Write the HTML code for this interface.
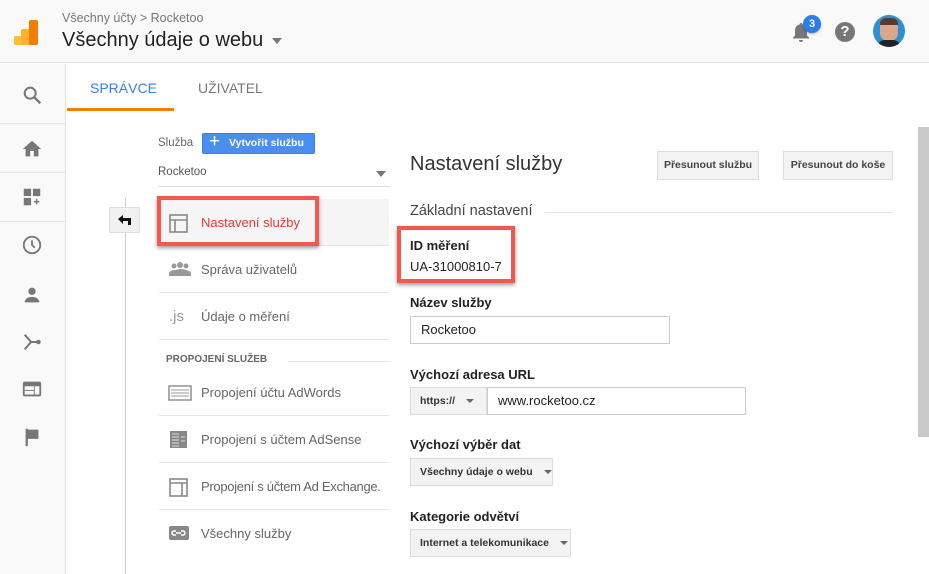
<!DOCTYPE html>
<html><head><meta charset="utf-8"><style>
*{box-sizing:border-box;margin:0;padding:0}
body{width:929px;height:574px;overflow:hidden;background:#fff;font-family:"Liberation Sans",Roboto,sans-serif;position:relative;color:#333}
.abs{position:absolute;white-space:nowrap}
.hdr{left:0;top:0;width:929px;height:63px;background:#f9f9f9;border-bottom:1px solid #e0e0e0}
.side{left:0;top:64px;width:66px;height:510px;background:#f9f9f9;border-right:1px solid #e3e3e3}
.ic{position:absolute;left:21px;width:22px;height:22px}
.sep{position:absolute;left:0;width:66px;height:1px;background:#e3e3e3}
.nav{left:159px;width:230px;height:47px;border-bottom:1px solid #e5e5e5;font-size:13px;color:#666;line-height:47px;padding-left:42px;overflow:hidden}
.nav svg{position:absolute;left:9px;top:14px}
.lbl{font-size:13px;font-weight:bold;color:#222;left:410px}
.btn{background:#f3f3f3;border:1px solid #ddd;font-size:10.5px;font-weight:bold;color:#444;text-align:center}
.sel{background:#f3f3f3;border:1px solid #ddd;font-size:10.5px;font-weight:bold;color:#333;padding-left:9px;line-height:26px}
.car{display:inline-block;border-left:4px solid transparent;border-right:4px solid transparent;border-top:4px solid #666;vertical-align:middle;margin-left:8px}
.inp{border:1px solid #ccc;font-size:13px;color:#222;padding-left:10px;line-height:26px;background:#fff}
</style></head><body>
<div class="abs hdr"></div>
<svg class="abs" style="left:14px;top:19px" width="28" height="28"><rect x="0" y="17" width="10" height="9" rx="2" fill="#fbc02d"/><rect x="7" y="10" width="10" height="16" rx="2" fill="#f9b233"/><rect x="15" y="1" width="9" height="25" rx="2" fill="#f57c00"/></svg>
<div class="abs" style="left:62px;top:11px;font-size:12.5px;color:#777">Všechny účty &gt; Rocketoo</div>
<div class="abs" style="left:62px;top:29px;font-size:20px;color:#222;font-weight:500">Všechny údaje o webu <span class="car" style="border-width:6px 5px 0 5px;border-top-color:#777;margin-left:3px"></span></div>
<svg class="abs" style="left:791px;top:22px" width="20" height="22"><path d="M10 1c1 0 1.5.8 1.5 1.5 3 .8 4.5 3 4.5 6v5l2 2v1H2v-1l2-2v-5c0-3 1.5-5.2 4.5-6C8.5 1.8 9 1 10 1zM8 18h4a2 2 0 01-4 0z" fill="#777"/></svg>
<div class="abs" style="left:803px;top:15px;width:18px;height:18px;border-radius:9px;background:#2b7de9;color:#fff;font-size:11px;font-weight:bold;text-align:center;line-height:18px;box-shadow:0 1px 2px rgba(0,0,0,.3)">3</div>
<div class="abs" style="left:835px;top:22px;width:20px;height:20px;border-radius:10px;background:#777;color:#fff;font-size:15px;font-weight:bold;text-align:center;line-height:20px">?</div>
<div class="abs" style="left:873px;top:15px;width:32px;height:32px;border-radius:16px;background:#2f8fd0;overflow:hidden"><div style="position:absolute;left:7px;top:4px;width:18px;height:22px;border-radius:8px;background:#d9a88a"></div><div style="position:absolute;left:7px;top:3px;width:18px;height:7px;background:#5a3a2a;border-radius:6px 6px 0 0"></div><div style="position:absolute;left:4px;top:25px;width:24px;height:10px;background:#222;border-radius:8px 8px 0 0"></div></div>

<div class="abs side">
<svg class="ic" style="top:20px" viewBox="0 0 24 24"><circle cx="10" cy="10" r="6" fill="none" stroke="#777" stroke-width="2.2"/><path d="M14.5 14.5L21 21" stroke="#777" stroke-width="2.6"/></svg>
<div class="sep" style="top:59px"></div>
<svg class="ic" style="top:74px" viewBox="0 0 24 24"><path d="M12 3L2 12h3v8h5v-6h4v6h5v-8h3z" fill="#777"/></svg>
<div class="sep" style="top:108px"></div>
<svg class="ic" style="top:122px" viewBox="0 0 24 24"><rect x="3" y="3" width="8" height="8" fill="#777"/><rect x="13" y="3" width="8" height="8" fill="#777"/><rect x="3" y="13" width="8" height="8" fill="#777"/><path d="M17 14v6M14 17h6" stroke="#777" stroke-width="1.6"/></svg>
<div class="sep" style="top:157px"></div>
<svg class="ic" style="top:170px" viewBox="0 0 24 24"><circle cx="12" cy="12" r="9" fill="none" stroke="#777" stroke-width="2"/><path d="M12 7v5l3 3" fill="none" stroke="#777" stroke-width="2"/></svg>
<svg class="ic" style="top:220px" viewBox="0 0 24 24"><circle cx="12" cy="8" r="4" fill="#777"/><path d="M4 20c0-4 4-6 8-6s8 2 8 6z" fill="#777"/></svg>
<svg class="ic" style="top:267px" viewBox="0 0 24 24"><path d="M4 4l7 8-7 8M11 12h9" fill="none" stroke="#777" stroke-width="2.2"/><circle cx="19" cy="12" r="2.5" fill="#777"/></svg>
<svg class="ic" style="top:314px" viewBox="0 0 24 24"><rect x="2" y="4" width="20" height="16" rx="2" fill="#777"/><rect x="4" y="9" width="10" height="4" fill="#f9f9f9"/><rect x="4" y="14" width="10" height="4" fill="#f9f9f9"/><rect x="15" y="9" width="5" height="9" fill="#f9f9f9"/></svg>
<svg class="ic" style="top:362px" viewBox="0 0 24 24"><path d="M5 3v19h2.5v-8H19V4H7.5V3z" fill="#777"/></svg>
</div>

<div class="abs" style="left:90px;top:80px;font-size:14px;color:#3a7ee8;font-weight:500">SPRÁVCE</div>
<div class="abs" style="left:198px;top:80px;font-size:14px;color:#777;font-weight:500">UŽIVATEL</div>
<div class="abs" style="left:67px;top:108px;width:107px;height:3px;background:#f57c00"></div>

<div class="abs" style="left:125px;top:198px;width:1px;height:376px;background:#ccc"></div>
<div class="abs" style="left:109px;top:207px;width:31px;height:26px;background:#f1f1f1;border:1px solid #ddd"><svg style="position:absolute;left:7px;top:6px" width="16" height="12"><path d="M1 5l5-4v3h8v7h-3V7H6v3z" fill="#111"/></svg></div>

<div class="abs" style="left:158px;top:137px;font-size:11.5px;color:#666">Služba</div>
<div class="abs" style="left:202px;top:133px;width:113px;height:21px;background:#4a8ef0;border:1px solid #3b7fe0;border-radius:2px;color:#fff;font-size:10.5px;font-weight:bold;line-height:19px;padding-left:26px">Vytvořit službu<span style="position:absolute;left:6px;top:-2px;font-size:19px;font-weight:normal">+</span></div>
<div class="abs" style="left:158px;top:166px;font-size:11.5px;color:#555">Rocketoo</div>
<div class="abs car" style="left:368px;top:171px;border-top-color:#777;border-width:6px 5px 0 5px"></div>
<div class="abs" style="left:158px;top:186px;width:232px;height:1px;background:#ddd"></div>

<div class="abs nav" style="top:199px;background:#f5f5f5;color:#e53935">Nastavení služby<svg width="22" height="22"><rect x="2" y="2" width="17" height="17" fill="none" stroke="#888" stroke-width="1.6"/><path d="M2 7h17M7 7v12" stroke="#888" stroke-width="1.6"/></svg></div>
<div class="abs" style="left:157px;top:196px;width:162px;height:50px;border:4px solid #f05a4e;box-shadow:0 2px 4px rgba(0,0,0,.4)"></div>
<div class="abs nav" style="top:246px">Správa uživatelů<svg width="24" height="20"><circle cx="6" cy="6" r="2.5" fill="#999"/><circle cx="12" cy="5" r="3" fill="#999"/><circle cx="18" cy="6" r="2.5" fill="#999"/><path d="M1 14c0-3 3-4 5-4s6-1 6-1 4 0 6 1 5 1 5 4v2H1z" fill="#999"/></svg></div>
<div class="abs nav" style="top:293px">Údaje o měření<span style="position:absolute;left:10px;top:0;color:#999;font-size:15px">.js</span></div>
<div class="abs" style="left:166px;top:354px;font-size:10px;font-weight:bold;color:#666">PROPOJENÍ SLUŽEB</div>
<div class="abs" style="left:288px;top:361px;width:102px;height:1px;background:#e5e5e5"></div>
<div class="abs nav" style="top:369px">Propojení účtu AdWords<svg width="24" height="20"><rect x="1" y="3" width="22" height="14" fill="none" stroke="#888" stroke-width="1.4"/><path d="M3 7h18M3 10h18M3 13h18" stroke="#999"/></svg></div>
<div class="abs nav" style="top:416px">Propojení s účtem AdSense<svg width="24" height="20"><rect x="2" y="1" width="17" height="17" fill="#888"/><path d="M4 4h7M4 7h7M4 10h7M4 13h7M4 16h7M13 7h4M13 11h4" stroke="#ddd"/></svg></div>
<div class="abs nav" style="top:463px;letter-spacing:-0.3px">Propojení s účtem Ad Exchange.<svg width="24" height="22"><rect x="2" y="2" width="17" height="17" fill="none" stroke="#888" stroke-width="1.6"/><path d="M2 6h17M14 6v13" stroke="#888" stroke-width="1.6"/></svg></div>
<div class="abs nav" style="top:510px;border-bottom:none">Všechny služby<svg width="24" height="20"><rect x="1" y="2" width="20" height="14" rx="2" fill="#888"/><path d="M8 7H6a2 2 0 000 4h2M13 7h2a2 2 0 010 4h-2M8 9h5" fill="none" stroke="#fff" stroke-width="1.5"/></svg></div>

<div class="abs" style="left:410px;top:153px;font-size:20px;color:#333">Nastavení služby</div>
<div class="abs btn" style="left:657px;top:151px;width:102px;height:29px;line-height:27px">Přesunout službu</div>
<div class="abs btn" style="left:783px;top:151px;width:110px;height:29px;line-height:27px">Přesunout do koše</div>
<div class="abs" style="left:410px;top:203px;font-size:14.5px;color:#444">Základní nastavení</div>
<div class="abs" style="left:545px;top:212px;width:348px;height:1px;background:#e3e3e3"></div>
<div class="abs" style="left:397px;top:226px;width:118px;height:57px;border:4px solid #f05a4e;box-shadow:0 2px 4px rgba(0,0,0,.4)"></div>
<div class="abs lbl" style="top:238px">ID měření</div>
<div class="abs" style="left:410px;top:259px;font-size:13px;color:#222">UA-31000810-7</div>
<div class="abs lbl" style="top:295px">Název služby</div>
<div class="abs inp" style="left:410px;top:316px;width:260px;height:28px">Rocketoo</div>
<div class="abs lbl" style="top:367px">Výchozí adresa URL</div>
<div class="abs sel" style="left:410px;top:387px;width:77px;height:28px">https:// <span class="car"></span></div>
<div class="abs inp" style="left:487px;top:387px;width:259px;height:28px">www.rocketoo.cz</div>
<div class="abs lbl" style="top:437px">Výchozí výběr dat</div>
<div class="abs sel" style="left:410px;top:458px;width:143px;height:28px">Všechny údaje o webu <span class="car"></span></div>
<div class="abs lbl" style="top:509px">Kategorie odvětví</div>
<div class="abs sel" style="left:410px;top:529px;width:161px;height:28px">Internet a telekomunikace <span class="car"></span></div>

<div class="abs" style="left:918px;top:127px;width:11px;height:310px;background:#c9c9c9"></div>
</body></html>
